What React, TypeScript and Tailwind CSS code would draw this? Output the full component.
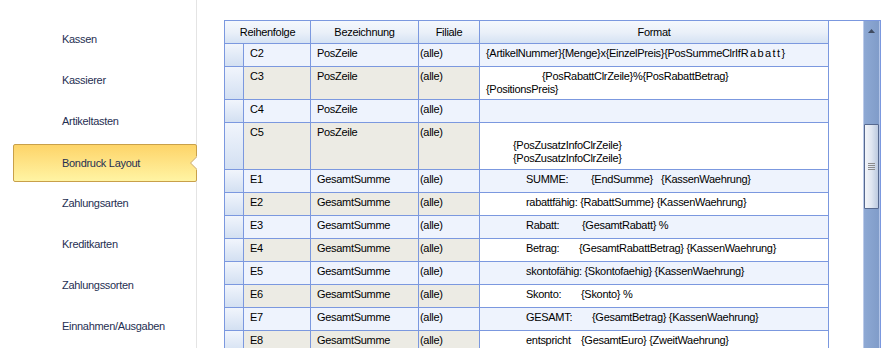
import type { ReactNode } from 'react'

const menu = [
  'Kassen',
  'Kassierer',
  'Artikeltasten',
  'Bondruck Layout',
  'Zahlungsarten',
  'Kreditkarten',
  'Zahlungssorten',
  'Einnahmen/Ausgaben',
]

function Label({ w, children }: { w: string; children: ReactNode }) {
  return <span className={`inline-block ${w}`}>{children}</span>
}

type Row = { id: string; name: string; h: string; fmt: ReactNode }

const rows: Row[] = [
  {
    id: 'C2',
    name: 'PosZeile',
    h: 'h-[23px]',
    fmt: (
      <div className="pl-[6px]">
        {'{ArtikelNummer}{Menge}x{EinzelPreis}{PosSummeClrIf'}
        <span className="tracking-[1.4px]">Rabatt</span>
        {'}'}
      </div>
    ),
  },
  {
    id: 'C3',
    name: 'PosZeile',
    h: 'h-[33px]',
    fmt: (
      <>
        <div className="pl-[62px]">{'{PosRabattClrZeile}%{PosRabattBetrag}'}</div>
        <div className="pl-[6px]">{'{PositionsPreis}'}</div>
      </>
    ),
  },
  { id: 'C4', name: 'PosZeile', h: 'h-[23px]', fmt: null },
  {
    id: 'C5',
    name: 'PosZeile',
    h: 'h-[47px]',
    fmt: (
      <>
        <div>&nbsp;</div>
        <div className="pl-[33px]">{'{PosZusatzInfoClrZeile}'}</div>
        <div className="pl-[33px]">{'{PosZusatzInfoClrZeile}'}</div>
      </>
    ),
  },
  {
    id: 'E1',
    name: 'GesamtSumme',
    h: 'h-[23px]',
    fmt: (
      <div className="pl-[46px]">
        <Label w="w-[65px]">SUMME:</Label>
        {'{EndSumme}   {KassenWaehrung}'}
      </div>
    ),
  },
  {
    id: 'E2',
    name: 'GesamtSumme',
    h: 'h-[23px]',
    fmt: <div className="pl-[46px]">{'rabattfähig: {RabattSumme} {KassenWaehrung}'}</div>,
  },
  {
    id: 'E3',
    name: 'GesamtSumme',
    h: 'h-[23px]',
    fmt: (
      <div className="pl-[46px]">
        <Label w="w-[56px]">Rabatt:</Label>
        {'{GesamtRabatt} %'}
      </div>
    ),
  },
  {
    id: 'E4',
    name: 'GesamtSumme',
    h: 'h-[23px]',
    fmt: (
      <div className="pl-[46px]">
        <Label w="w-[53px]">Betrag:</Label>
        {'{GesamtRabattBetrag} {KassenWaehrung}'}
      </div>
    ),
  },
  {
    id: 'E5',
    name: 'GesamtSumme',
    h: 'h-[23px]',
    fmt: <div className="pl-[46px]">{'skontofähig: {Skontofaehig} {KassenWaehrung}'}</div>,
  },
  {
    id: 'E6',
    name: 'GesamtSumme',
    h: 'h-[23px]',
    fmt: (
      <div className="pl-[46px]">
        <Label w="w-[55px]">Skonto:</Label>
        {'{Skonto} %'}
      </div>
    ),
  },
  {
    id: 'E7',
    name: 'GesamtSumme',
    h: 'h-[23px]',
    fmt: (
      <div className="pl-[46px]">
        <Label w="w-[66px]">GESAMT:</Label>
        {'{GesamtBetrag} {KassenWaehrung}'}
      </div>
    ),
  },
  {
    id: 'E8',
    name: 'GesamtSumme',
    h: 'h-[23px]',
    fmt: (
      <div className="pl-[46px]">
        <Label w="w-[55px]">entspricht</Label>
        {'{GesamtEuro} {ZweitWaehrung}'}
      </div>
    ),
  },
]

const line = 'border-r border-b border-[#7b98df]'
const headBg = 'bg-gradient-to-b from-[#f5f8fd] via-[#eaf0f9] to-[#d3e1f3]'

function Sidebar() {
  return (
    <aside className="w-[197px] shrink-0 border-r border-[#e4e4e4] pt-[19px] text-[#1f2f52]">
      {menu.map((item) =>
        item === 'Bondruck Layout' ? (
          <div key={item} className="h-[41px] pt-[2px]">
            <div className="relative ml-[13px] flex h-[38px] w-[184px] items-center rounded-[2px] border border-[#c8a04a] bg-gradient-to-b from-[#fdd468] to-[#fff4a3] pl-[48px]">
              {item}
              <svg
                className="absolute right-[-1px] top-1/2 h-[14px] w-[8px] -translate-y-1/2"
                viewBox="0 0 8 14"
              >
                <polygon points="8,0 1,7 8,14" fill="#ffffff" />
                <polyline points="8,0.5 1.5,7 8,13.5" fill="none" stroke="#c8a04a" strokeWidth="1" />
              </svg>
            </div>
          </div>
        ) : (
          <div key={item} className="flex h-[41px] items-center pl-[62px]">
            {item}
          </div>
        )
      )}
    </aside>
  )
}

function Scrollbar() {
  return (
    <div className="flex w-[17px] shrink-0 flex-col border-l border-r border-l-[#bccbe9] border-r-[#b3c5e8] bg-gradient-to-r from-[#8ea9d4] to-[#809cc9]">
      <div className="flex h-[20px] items-center justify-center">
        <svg width="7" height="4" viewBox="0 0 7 4">
          <polygon points="0,4 3.5,0 7,4" fill="#3f4b60" />
        </svg>
      </div>
      <div className="mt-[83px] flex h-[85px] w-[15px] flex-col items-center justify-center gap-[1px] rounded-[1px] border border-[#56698f] bg-gradient-to-r from-[#f3f5f9] via-[#dfe6f1] to-[#bccadf]">
        <div className="h-px w-[7px] bg-[#8c8c8c]" />
        <div className="h-px w-[7px] bg-[#8c8c8c]" />
        <div className="h-px w-[7px] bg-[#8c8c8c]" />
        <div className="h-px w-[7px] bg-[#8c8c8c]" />
      </div>
    </div>
  )
}

function Grid() {
  return (
    <div className="w-[604px] shrink-0">
      <div className={`flex h-[23px] ${headBg}`}>
        {[
          ['Reihenfolge', 'w-[86px]'],
          ['Bezeichnung', 'w-[108px]'],
          ['Filiale', 'w-[61px]'],
          ['Format', 'w-[349px]'],
        ].map(([title, w]) => (
          <div key={title} className={`flex items-center justify-center ${w} ${line}`}>
            {title}
          </div>
        ))}
      </div>
      {rows.map((r, i) => {
        const odd = i % 2 === 1
        const cellBg = odd ? 'bg-[#ecebe4]' : 'bg-[#eef3fd]'
        const fmtBg = odd ? 'bg-white' : 'bg-[#eef3fd]'
        return (
          <div key={r.id} className={`flex ${r.h} whitespace-pre`}>
            <div className={`w-[19px] ${line} bg-gradient-to-b from-[#f1f5fc] to-[#d3e0f2]`} />
            <div className={`w-[67px] pl-[6px] pt-[3px] ${line} ${cellBg}`}>{r.id}</div>
            <div className={`w-[108px] pl-[6px] pt-[3px] ${line} ${cellBg}`}>{r.name}</div>
            <div className={`w-[61px] pl-[1px] pt-[3px] ${line} ${cellBg}`}>(alle)</div>
            <div className={`w-[349px] overflow-hidden pt-[3px] ${line} ${fmtBg}`}>{r.fmt}</div>
          </div>
        )
      })}
    </div>
  )
}

export default function App() {
  return (
    <div className="flex h-[348px] w-[888px] overflow-hidden bg-white font-['Liberation_Sans',Arial,sans-serif] text-[11px] leading-[13px] tracking-[-0.3px] text-black">
      <Sidebar />
      <div className="w-[27px] shrink-0" />
      <div className="mt-[20px] flex w-[657px] shrink-0 self-start border-l border-r border-t border-[#7b98df]">
        <Grid />
        <div className="flex-1" />
        <Scrollbar />
      </div>
    </div>
  )
}
